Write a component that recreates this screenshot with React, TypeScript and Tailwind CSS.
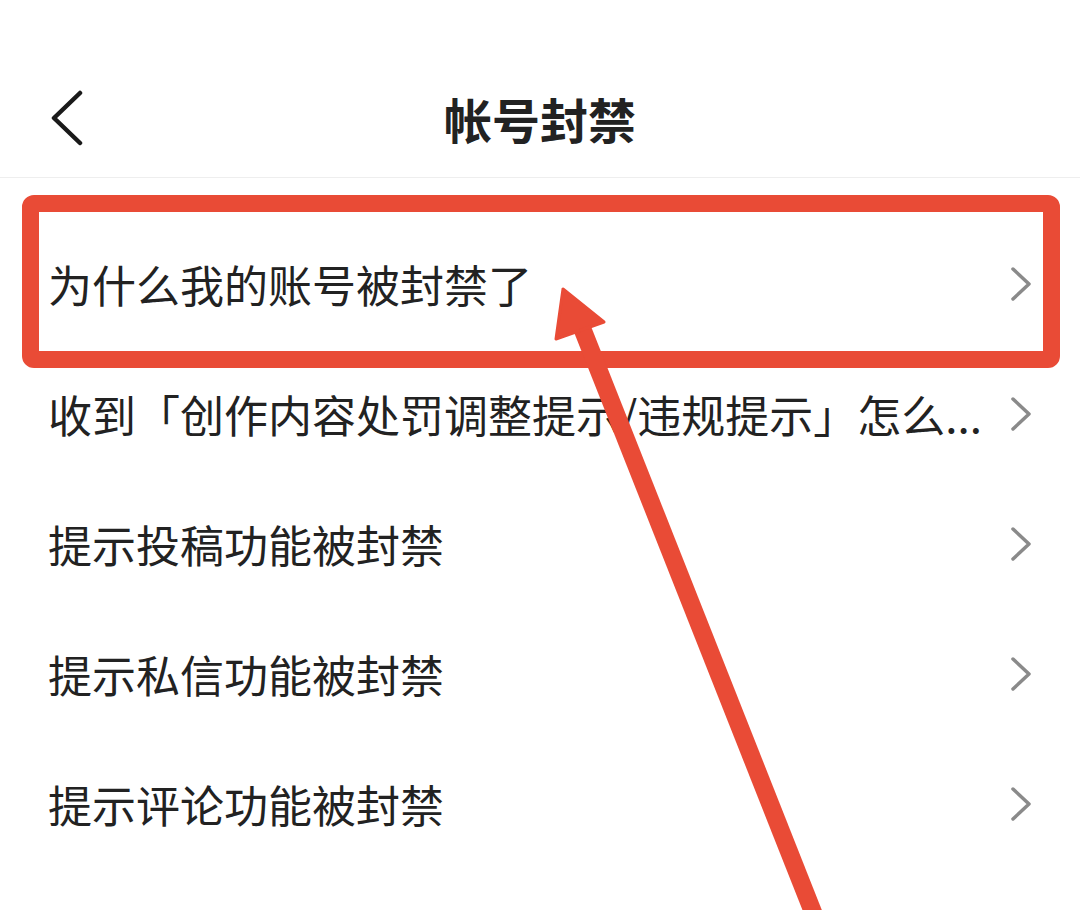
import React from "react";

const items = [
  "为什么我的账号被封禁了",
  "收到「创作内容处罚调整提示/违规提示」怎么...",
  "提示投稿功能被封禁",
  "提示私信功能被封禁",
  "提示评论功能被封禁",
];

const ChevronRight = () => (
  <svg width="22" height="34" viewBox="0 0 22 34" className="shrink-0">
    <polyline
      points="3,2 19,17 3,32"
      fill="none"
      stroke="#8a8a8a"
      strokeWidth="3.5"
      strokeLinecap="round"
      strokeLinejoin="round"
    />
  </svg>
);

export default function App() {
  return (
    <div className="relative w-[1080px] h-[910px] bg-white overflow-hidden [font-family:'Noto_Sans_CJK_SC','Noto_Sans',sans-serif] text-[#222222]">
      {/* Header */}
      <header className="h-[178px] pt-[58px] grid grid-cols-[1fr_auto_1fr] items-center border-b border-[#eeeeee]">
        <div className="pl-[50px]">
          <svg width="34" height="56" viewBox="0 0 34 56">
            <polyline
              points="30,3 4,28 30,53"
              fill="none"
              stroke="#1a1a1a"
              strokeWidth="4.5"
              strokeLinecap="round"
              strokeLinejoin="round"
            />
          </svg>
        </div>
        <h1 className="text-[48px] font-bold leading-none tracking-normal">帐号封禁</h1>
        <div />
      </header>

      {/* List */}
      <ul className="pt-[41px]">
        {items.map((label, i) => (
          <li
            key={i}
            className="h-[130px] flex items-center justify-between pl-[48px] pr-[48px]"
          >
            <span className="text-[44px] leading-none whitespace-nowrap">{label}</span>
            <ChevronRight />
          </li>
        ))}
      </ul>

      {/* Annotation: highlight box */}
      <div className="absolute left-[22px] top-[195px] w-[1038px] h-[173px] border-[17px] border-[#e94b36] rounded-[12px] pointer-events-none" />

      {/* Annotation: arrow */}
      <svg
        className="absolute inset-0 pointer-events-none"
        width="1080"
        height="910"
        viewBox="0 0 1080 910"
      >
        <line
          x1="582"
          y1="328"
          x2="824"
          y2="940"
          stroke="#e94b36"
          strokeWidth="18"
        />
        <polygon points="563,289 556,339 604,322" fill="#e94b36" stroke="#e94b36" strokeWidth="3" strokeLinejoin="round" />
      </svg>
    </div>
  );
}
